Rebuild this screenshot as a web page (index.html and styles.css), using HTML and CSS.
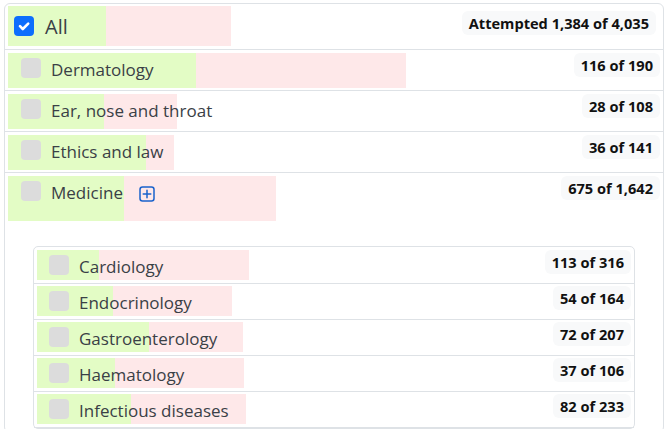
FILE: index.html
```html
<!DOCTYPE html>
<html lang="en">
<head>
<meta charset="utf-8">
<title>Topics</title>
<link rel="stylesheet" href="styles.css">
</head>
<body>
<div class="tree">
  <ul class="list top">
    <li class="row row-all">
      <label class="bar bar-all" style="--done:98px;--total:223px">
        <span class="check checked"><svg viewBox="0 0 20 20" width="20" height="20"><path d="M6 10.2l2.8 2.8L14.2 7.6" fill="none" stroke="#fff" stroke-width="2.6" stroke-linecap="round" stroke-linejoin="round"/></svg></span>
        <span class="name">All</span>
      </label>
      <span class="badge">Attempted 1,384 of 4,035</span>
    </li>
    <li class="row">
      <label class="bar" style="--done:188px;--total:398px"><span class="check"></span><span class="name">Dermatology</span></label>
      <span class="badge">116 of 190</span>
    </li>
    <li class="row">
      <label class="bar" style="--done:96px;--total:169px"><span class="check"></span><span class="name">Ear, nose and throat</span></label>
      <span class="badge">28 of 108</span>
    </li>
    <li class="row">
      <label class="bar" style="--done:138px;--total:166px"><span class="check"></span><span class="name">Ethics and law</span></label>
      <span class="badge">36 of 141</span>
    </li>
    <li class="row row-open">
      <div class="row-head">
        <div class="bar bar-tall" style="--done:116px;--total:268px">
          <span class="check"></span><span class="name">Medicine</span>
          <button class="expand" type="button" aria-label="Expand"><svg viewBox="0 0 16 16" width="16" height="16" fill="none" stroke="currentColor" stroke-width="1.5" stroke-linecap="round"><rect x="1" y="1" width="14" height="14" rx="2.5"/><path d="M8 4.2v7.6M4.2 8h7.6"/></svg></button>
        </div>
        <span class="badge">675 of 1,642</span>
      </div>
      <ul class="list nested">
        <li class="row">
          <label class="bar" style="--done:62px;--total:212px"><span class="check"></span><span class="name">Cardiology</span></label>
          <span class="badge">113 of 316</span>
        </li>
        <li class="row">
          <label class="bar" style="--done:76px;--total:195px"><span class="check"></span><span class="name">Endocrinology</span></label>
          <span class="badge">54 of 164</span>
        </li>
        <li class="row">
          <label class="bar" style="--done:112px;--total:206px"><span class="check"></span><span class="name">Gastroenterology</span></label>
          <span class="badge">72 of 207</span>
        </li>
        <li class="row">
          <label class="bar" style="--done:78px;--total:207px"><span class="check"></span><span class="name">Haematology</span></label>
          <span class="badge">37 of 106</span>
        </li>
        <li class="row">
          <label class="bar" style="--done:94px;--total:209px"><span class="check"></span><span class="name">Infectious diseases</span></label>
          <span class="badge">82 of 233</span>
        </li>
      </ul>
    </li>
  </ul>
</div>
</body>
</html>
```
FILE: styles.css
```css
html {
  overflow: hidden;
}

body {
  margin: 0;
  background: #fff;
  font-family: "Open Sans", "Noto Sans", sans-serif;
  color: #3a4046;
}

.tree {
  margin: 3px 4px 0;
  border: 1px solid #dee2e6;
  border-radius: 6px;
}

.list {
  list-style: none;
  margin: 0;
  padding: 0;
}

.row {
  display: flex;
  justify-content: space-between;
  align-items: flex-start;
  padding: 3px 3px 2px;
  border-bottom: 1px solid #dee2e6;
}

.row-all {
  padding: 2px 7px 3px 3px;
}

.row-open {
  display: block;
}

.row-head {
  display: flex;
  justify-content: space-between;
  align-items: flex-start;
}

.bar {
  flex: 1;
  display: flex;
  align-items: flex-start;
  height: 35px;
  box-sizing: border-box;
  padding: 5px 0 0 13px;
  white-space: nowrap;
  background: linear-gradient(90deg, #e3fcc5 var(--done), #fee8e9 var(--done)) 0 0 / var(--total) 100% no-repeat;
}

.bar-all {
  height: 40px;
  padding: 10px 0 0 6px;
}

.bar-tall {
  height: 45px;
}

.check {
  flex: none;
  width: 20px;
  height: 20px;
  border-radius: 4px;
  background: #dcdcdc;
  margin-right: 10px;
}

.check svg {
  display: block;
}

.checked {
  background: #0d6efd;
  margin-right: 11px;
}

.name {
  font-size: 17px;
  line-height: 24px;
}

.bar-all .name {
  font-size: 20px;
  line-height: 21px;
}

.expand {
  border: 0;
  background: none;
  padding: 0;
  margin: 5px 0 0 16px;
  color: #1a62cc;
  display: block;
  height: 16px;
}

.expand svg {
  display: block;
}

.badge {
  flex: none;
  font-size: 14.6px;
  font-weight: 700;
  line-height: 24px;
  padding: 0 7px;
  border-radius: 6px;
  background: #f8f9fa;
  color: #111;
  white-space: nowrap;
}

.row-all .badge {
  margin-top: 5px;
}

.nested {
  margin: 25px 25px 0;
  border: 1px solid #dee2e6;
  border-radius: 5px;
}

.nested .row {
  padding: 2px 3px 3px;
}

.nested .row:first-child {
  padding-top: 3px;
}

.nested .bar {
  height: 30px;
  padding-left: 12px;
}
```
